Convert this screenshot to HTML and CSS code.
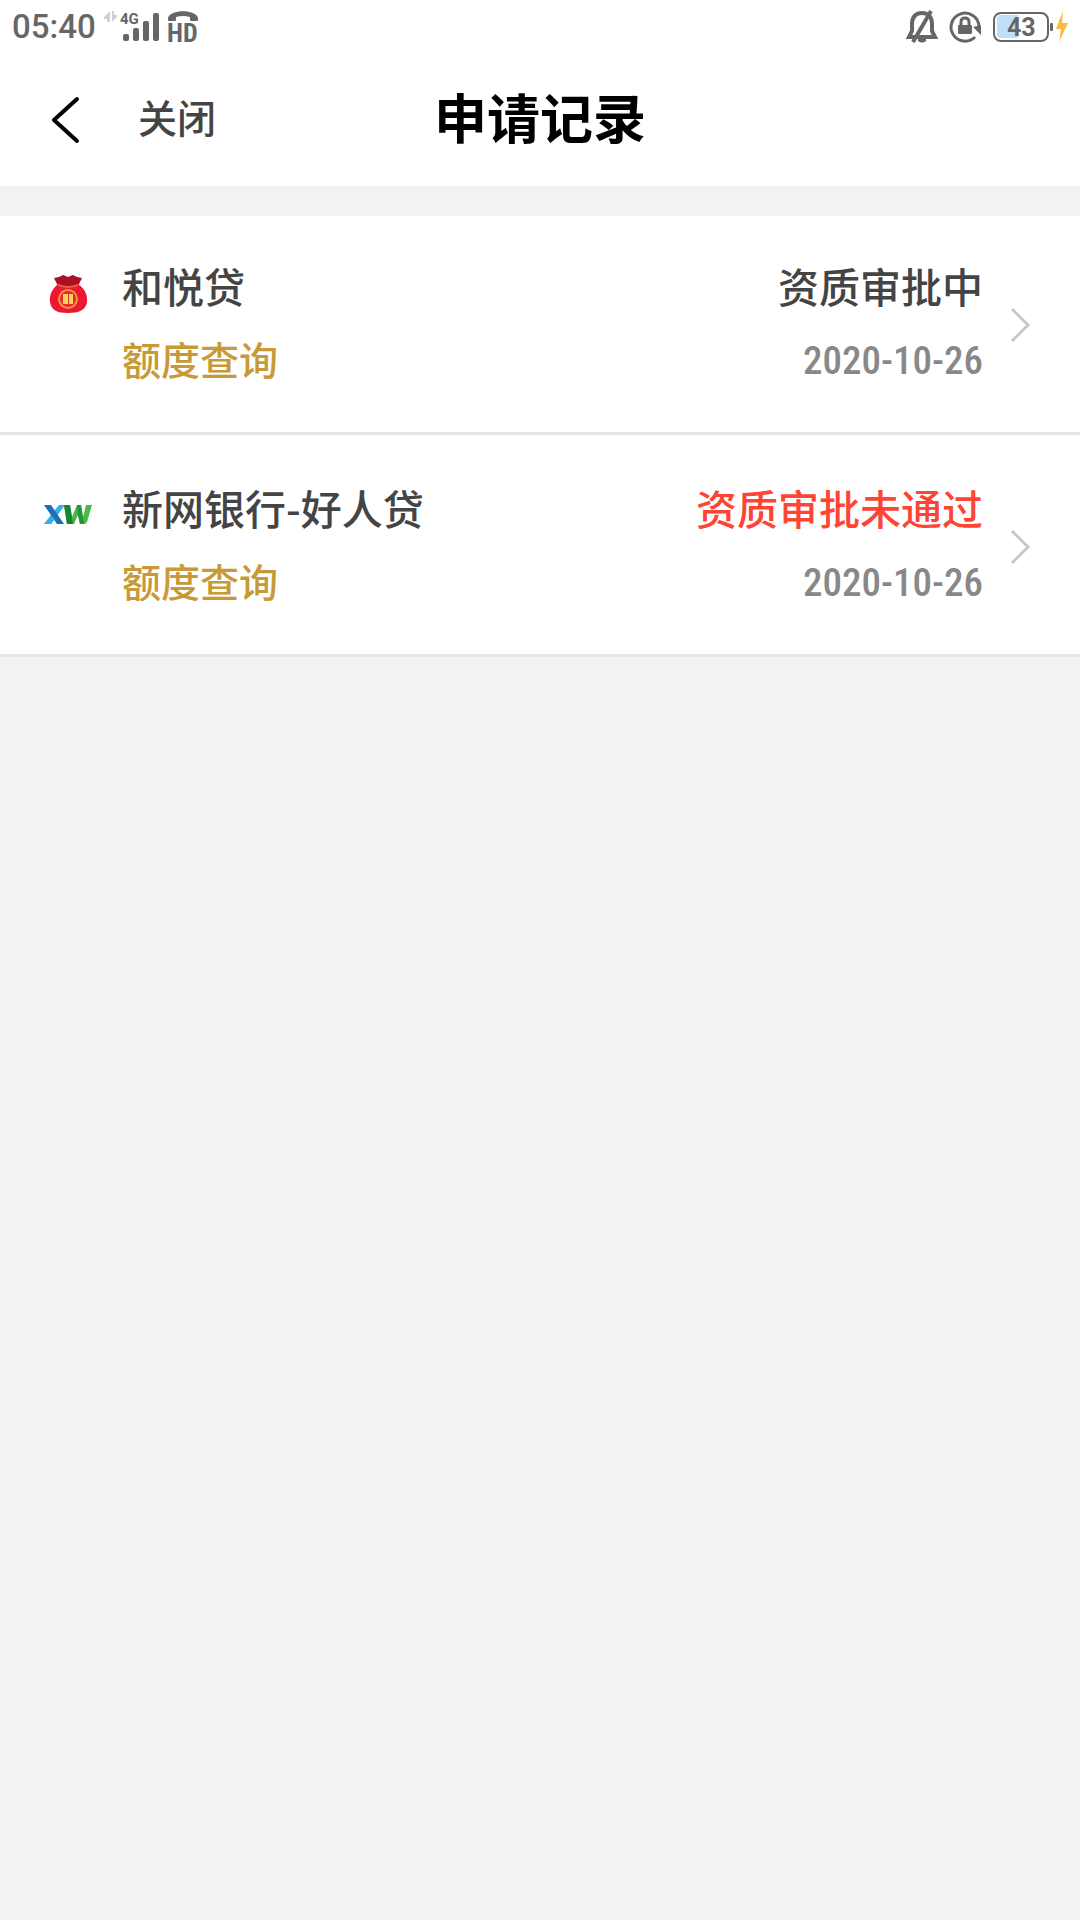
FILE: index.html
```html
<!DOCTYPE html>
<html lang="zh-CN">
<head>
<meta charset="utf-8">
<meta name="viewport" content="width=device-width, initial-scale=1">
<title>申请记录</title>
<link rel="stylesheet" href="styles.css">
</head>
<body>
<div class="status">
  <div class="status-group">
    <time class="clock">05:40</time>
    <svg class="signal" width="56" height="34" viewBox="102 10 56 34" aria-hidden="true">
      <path d="M109 11v11h-3v-3h-3v-2zM111 11v11l5-5v-2h-3v-4z" fill="#d0d0d0"/>
      <text x="119" y="24" class="net">4G</text>
      <rect x="122" y="34" width="6" height="7" rx="2"/>
      <rect x="132" y="28" width="6" height="13" rx="2"/>
      <rect x="142" y="21" width="6" height="20" rx="2"/>
      <rect x="152" y="13" width="6" height="28" rx="2"/>
    </svg>
    <svg class="hd" width="34" height="34" viewBox="166 10 34 34" aria-hidden="true">
      <path d="M168 20v-2c2-9 28-9 30 0v2q0 1-1 1h-6q-1 0-1-1v-3q-7-2-14 0v3q0 1-1 1h-6q-1 0-1-1z"/>
      <text x="167" y="42" class="hd-text">HD</text>
    </svg>
  </div>
  <div class="status-group status-right">
    <svg width="30" height="34" viewBox="906 10 30 34" aria-hidden="true">
      <path d="M908 37h26l-3-6v-8q-1-10-10-10t-10 10v8z" fill="none" stroke="#666" stroke-width="4"/>
      <path d="M917 39h8v2q-4 3-8 0z"/>
      <path d="M912 42l18-31" stroke="#666" stroke-width="4"/>
    </svg>
    <svg width="32" height="34" viewBox="948 10 32 34" aria-hidden="true">
      <path d="M974 37A14 14 0 1 1 978 26" fill="none" stroke="#666" stroke-width="3"/>
      <path d="M972 27l8-2v10z"/>
      <rect x="957" y="25" width="14" height="9" rx="1"/>
      <path d="M960 26v-4q0-4 4-4t4 4v4" fill="none" stroke="#666" stroke-width="3"/>
    </svg>
    <svg width="76" height="34" viewBox="993 10 76 34" aria-hidden="true">
      <path d="M1018 15v23h-17q-4 0-4-4V19q0-4 4-4z" fill="#bfe0fb"/>
      <rect x="994" y="13" width="54" height="28" rx="7" fill="none" stroke="#666" stroke-width="2"/>
      <rect x="1050" y="23" width="3" height="8" rx="1"/>
      <text x="1007" y="36" class="level">43</text>
      <path d="M1063 11l-7 18h5l-2 13 9-19h-6z" fill="#fbbb3a"/>
    </svg>
  </div>
</div>
<header class="header">
  <nav class="nav">
    <button class="back" type="button" aria-label="返回">
      <svg width="28" height="46" viewBox="0 0 28 46"><path d="M25 2L2 23l23 21" fill="none" stroke="#000" stroke-width="4" stroke-linecap="round" stroke-linejoin="round"/></svg>
    </button>
    <button class="close" type="button">关闭</button>
  </nav>
  <h1 class="title">申请记录</h1>
</header>
<main class="records">
  <a class="record" href="#heyue">
    <svg class="logo" width="48" height="48" viewBox="0 0 48 48" aria-hidden="true">
      <path d="M13 15C8 19 5 26 6 32c1 8 7 11 18 11s18-3 19-11c1-7-3-14-8-17z" fill="#ed1731"/>
      <path d="M10 8l5-1 4-2 5 2 5-2 4 2 5 1-4 8q-10 4-20 0z" fill="#ab1026"/>
      <path d="M14 15q10 4 20 0" fill="none" stroke="#f0584a" stroke-width="2"/>
      <circle cx="24" cy="29" r="9" fill="#e52b2c" stroke="#f2973a" stroke-width="2"/>
      <path d="M19 24h5v10h-5zM25 24h4v10h-4z" fill="#fcd45b"/>
    </svg>
    <span class="info"><span class="name">和悦贷</span><span class="kind">额度查询</span></span>
    <span class="result"><span class="state">资质审批中</span><time class="date">2020-10-26</time></span>
    <svg class="arrow" width="20" height="36" viewBox="0 0 20 36" aria-hidden="true"><path d="M2 2l16 16L2 34"/></svg>
  </a>
  <a class="record" href="#xinwang">
    <svg class="logo" width="48" height="48" viewBox="0 0 48 48" aria-hidden="true">
      <path d="M15 13h6L7 32H0l10-13z" fill="#35b0ef"/>
      <path d="M0 13h7l13 19h-7z" fill="#1c6fb8"/>
      <path d="M7 24l4 3-4 5H0z" fill="#35b0ef"/>
      <path d="M20 13h6l2 12 5-12h4l2 12 3-12h6l-5 17q-1 2-3 2h-4l-2-9-4 9h-7z" fill="#4db84a"/>
      <path d="M20 13h6l3 19h-6z" fill="#16852f"/>
      <path d="M33 13h4l3 19h-4l-2-9z" fill="#259538"/>
    </svg>
    <span class="info"><span class="name">新网银行-好人贷</span><span class="kind">额度查询</span></span>
    <span class="result"><span class="state failed">资质审批未通过</span><time class="date">2020-10-26</time></span>
    <svg class="arrow" width="20" height="36" viewBox="0 0 20 36" aria-hidden="true"><path d="M2 2l16 16L2 34"/></svg>
  </a>
</main>
</body>
</html>
```
FILE: styles.css
```css
* {
  box-sizing: border-box;
}

body {
  margin: 0;
  min-height: 100vh;
  background: #f2f2f2;
  color: #444;
  font-family: "Noto Sans CJK SC", sans-serif;
  font-weight: 500;
}

svg {
  display: block;
  flex: none;
  overflow: visible;
}

/* Status bar */
.status {
  display: flex;
  justify-content: space-between;
  align-items: center;
  height: 54px;
  padding: 0 11px 0 12px;
  background: #fff;
  color: #666;
  fill: #666;
}

.status-group {
  display: flex;
  align-items: center;
  gap: 7px;
}

.status-right {
  gap: 12px;
}

.clock {
  font: 500 33px/40px Roboto, sans-serif;
}

.net {
  font: 700 15px Roboto, sans-serif;
}

.hd-text {
  font: 700 26px "Roboto Condensed", Roboto, sans-serif;
}

.level {
  font: 700 25px Roboto, sans-serif;
}

/* Title bar */
.header {
  display: grid;
  grid-template-columns: 1fr auto 1fr;
  align-items: center;
  height: 132px;
  padding-bottom: 8px;
  background: #fff;
}

.nav {
  display: flex;
  align-items: center;
  gap: 58px;
  padding-left: 52px;
}

.back,
.close {
  padding: 0;
  border: 0;
  background: none;
  color: inherit;
  font: inherit;
}

.back {
  padding-top: 8px;
}

.close {
  font-size: 39px;
  line-height: 60px;
}

.title {
  margin: 0;
  color: #000;
  font-size: 53px;
  font-weight: 700;
  line-height: 80px;
}

/* Record list */
.records {
  margin-top: 30px;
}

.record {
  display: flex;
  padding: 42px 50px 38px 44px;
  border-bottom: 3px solid #e5e5e5;
  background: #fff;
  color: inherit;
  text-decoration: none;
}

.record:first-child {
  padding-top: 39px;
}

.logo {
  margin: 15px 30px 0 0;
}

.info,
.result {
  display: flex;
  flex-direction: column;
  gap: 13px;
  line-height: 60px;
  white-space: nowrap;
}

.info {
  flex: 1;
}

.result {
  align-items: flex-end;
}

.name,
.state {
  font-size: 41px;
}

.kind {
  color: #c89a37;
  font-size: 39px;
}

.failed {
  color: #ff4436;
}

.date {
  color: #888;
  font-family: "Roboto Condensed", Roboto, sans-serif;
  font-size: 39px;
  line-height: 66px;
}

.arrow {
  align-self: center;
  margin-left: 27px;
  fill: none;
  stroke: #c8c8c8;
  stroke-width: 3;
}
```
